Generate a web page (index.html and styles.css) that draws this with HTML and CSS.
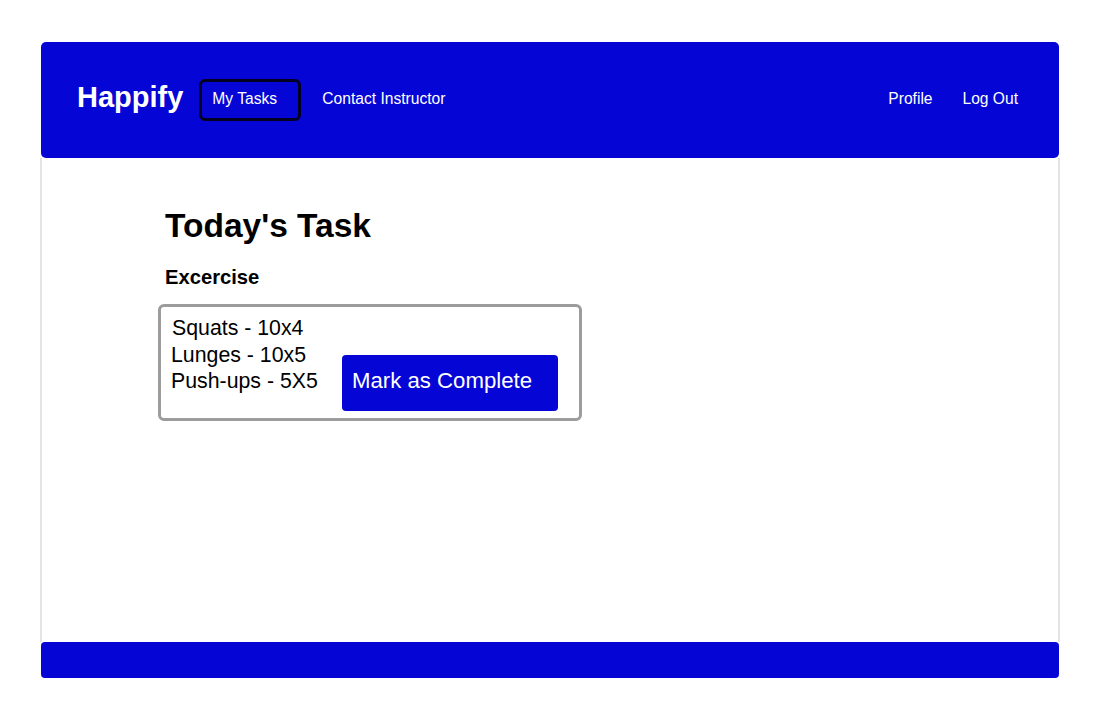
FILE: index.html
```html
<!DOCTYPE html>
<html lang="en">
<head>
<meta charset="utf-8">
<title>Happify</title>
<link rel="stylesheet" href="styles.css">
</head>
<body>
<div class="app">
  <header class="topbar">
    <div class="brand">Happify</div>
    <nav class="nav-left">
      <a class="nav-link active" href="#">My Tasks</a>
      <a class="nav-link" href="#">Contact Instructor</a>
    </nav>
    <nav class="nav-right">
      <a class="nav-link" href="#">Profile</a>
      <a class="nav-link" href="#">Log Out</a>
    </nav>
  </header>
  <main class="content">
    <h1 class="title">Today's Task</h1>
    <h2 class="subtitle">Excercise</h2>
    <div class="task-card">
      <ul class="task-list">
        <li class="first">Squats - 10x4</li>
        <li>Lunges - 10x5</li>
        <li>Push-ups - 5X5</li>
      </ul>
      <button class="complete-btn" type="button">Mark as Complete</button>
    </div>
  </main>
  <footer class="bottombar"></footer>
</div>
</body>
</html>
```
FILE: styles.css
```css
* { box-sizing: border-box; }
html, body { margin: 0; padding: 0; background: #ffffff; }
body { font-family: "Liberation Sans", Arial, sans-serif; color: #000; }

.app {
  width: 1018px;
  margin: 42px 0 0 41px;
  display: flex;
  flex-direction: column;
}

.topbar {
  height: 116px;
  background: #0505d6;
  border-radius: 5px;
  display: flex;
  align-items: center;
  padding: 0 41px 0 36px;
  color: #fff;
}

.brand {
  font-size: 29px;
  font-weight: bold;
  margin-bottom: 6px;
}

.nav-left {
  display: flex;
  align-items: center;
  margin-left: 16px;
  flex: 1;
}

.nav-right {
  display: flex;
  align-items: center;
  gap: 30px;
}

.nav-link {
  color: #fff;
  text-decoration: none;
  font-size: 15.6px;
  margin-bottom: 3px;
}

.nav-link.active {
  width: 102px;
  height: 42px;
  border: 3px solid #000022;
  border-radius: 6px;
  padding: 0 0 2px 10px;
  display: flex;
  align-items: center;
  margin: 0 21px 0 0;
}

.content {
  height: 484px;
  border-left: 2px solid #e4e4e4;
  border-right: 2px solid #e4e4e4;
  margin: 0 -1px;
  padding: 49px 0 0 123px;
}

.title {
  margin: 0;
  font-size: 33.5px;
  font-weight: bold;
}

.subtitle {
  margin: 21px 0 0;
  font-size: 20.2px;
  font-weight: bold;
}

.task-card {
  margin: 15px 0 0 -7px;
  width: 424px;
  border: 3px solid #9c9c9c;
  border-radius: 6px;
  display: flex;
  padding: 7px 21px 7px 10px;
}

.task-list {
  list-style: none;
  margin: 1px 0 0;
  padding: 0;
  width: 171px;
  flex: none;
  font-size: 21.3px;
  line-height: 26.5px;
}

.task-list .first { padding-left: 1px; }

.complete-btn {
  margin-top: 41px;
  width: 216px;
  height: 56px;
  flex: none;
  background: #0505d6;
  color: #fff;
  border: none;
  border-radius: 4px;
  font-family: "Liberation Sans", Arial, sans-serif;
  font-size: 22.2px;
  text-align: left;
  padding: 0 0 4px 10px;
}

.bottombar {
  height: 36px;
  background: #0505d6;
  border-radius: 4px;
}
```
